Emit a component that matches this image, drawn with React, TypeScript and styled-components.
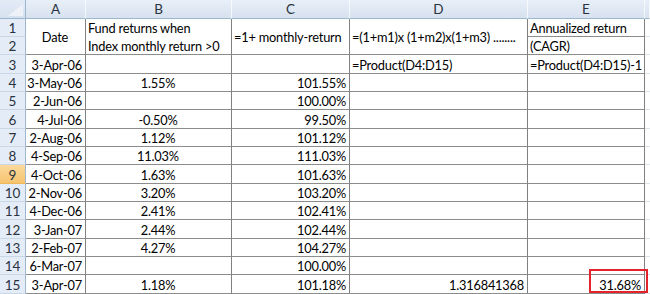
import React from 'react'
import styled, { createGlobalStyle } from 'styled-components'

const GlobalStyle = createGlobalStyle`
    body {
        margin: 0;
        background: #fff;
        font-family: Lato, "Liberation Sans", sans-serif;
    }
`

const Sheet = styled.div`
    position: relative;
    display: grid;
    grid-template-columns: 26px 60px 146px 118px 178px 117px 5px;
    grid-template-rows: 19px repeat(5, 18px 18px 19px);
    width: 650px;
    height: 294px;
    overflow: hidden;
    font-size: 12.8px;
    letter-spacing: -0.2px;
    color: #000;
`

const Corner = styled.div`
    display: flex;
    align-items: flex-end;
    justify-content: flex-end;
    padding: 0 2px 2px 0;
    background: linear-gradient(#e3ebf6, #d6e1ef);
    border-right: 1px solid #9eb6ce;
    border-bottom: 1px solid #9eb6ce;
    box-sizing: border-box;
`

const CornerMark = styled.div`
    width: 0;
    height: 0;
    border-left: 15px solid transparent;
    border-bottom: 12px solid #eef2f8;
`

const ColHead = styled.div`
    display: flex;
    align-items: center;
    justify-content: center;
    background: linear-gradient(#e8eff8, #d7e2ef);
    border-right: 1px solid #f6f9fc;
    border-bottom: 1px solid #9eb6ce;
    box-sizing: border-box;
    color: #2a3340;
    font-size: 13.5px;
    letter-spacing: 0;
`

const RowHead = styled.div<{ $active?: boolean }>`
    display: flex;
    align-items: center;
    justify-content: center;
    background: ${p => (p.$active ? 'linear-gradient(#fbd99c, #f6c46e)' : '#e4ecf7')};
    border-right: 1px solid #9eb6ce;
    border-bottom: 1px solid ${p => (p.$active ? '#f0b85a' : '#c9d6e6')};
    box-sizing: border-box;
    color: #2a3340;
    font-size: 13.5px;
    letter-spacing: 0;
    padding-top: 1px;
`

const Cell = styled.div<{ $align?: 'left' | 'center' | 'right'; $rows?: number }>`
    display: flex;
    align-items: center;
    justify-content: ${p => (p.$align === 'right' ? 'flex-end' : p.$align === 'center' ? 'center' : 'flex-start')};
    grid-row: span ${p => p.$rows || 1};
    padding: 1px 3px 0 2px;
    border-right: 1px solid #808080;
    border-bottom: 1px solid #8c8c8c;
    box-sizing: border-box;
    white-space: nowrap;
    overflow: hidden;
    min-width: 0;
`

const Wrapped = styled(Cell)`
    white-space: normal;
    line-height: 18px;
    align-items: flex-start;
    padding-top: 0;
`

const Filler = styled.div`
    border-bottom: 1px solid #dde3ec;
`

const Highlight = styled.div`
    position: absolute;
    left: 589px;
    top: 269px;
    width: 59px;
    height: 24px;
    border: 2px solid #e3242b;
    box-sizing: border-box;
    pointer-events: none;
`

const rows: [string, string, string][] = [
    ['3-May-06', '1.55%', '101.55%'],
    ['2-Jun-06', '', '100.00%'],
    ['4-Jul-06', '-0.50%', '99.50%'],
    ['2-Aug-06', '1.12%', '101.12%'],
    ['4-Sep-06', '11.03%', '111.03%'],
    ['4-Oct-06', '1.63%', '101.63%'],
    ['2-Nov-06', '3.20%', '103.20%'],
    ['4-Dec-06', '2.41%', '102.41%'],
    ['3-Jan-07', '2.44%', '102.44%'],
    ['2-Feb-07', '4.27%', '104.27%'],
    ['6-Mar-07', '', '100.00%'],
    ['3-Apr-07', '1.18%', '101.18%'],
]

const App = () => {
    const last = rows.length - 1

    return (
        <React.Fragment>
            <GlobalStyle />
            <Sheet>
                <Corner><CornerMark /></Corner>
                {['A', 'B', 'C', 'D', 'E', ''].map((c, i) => <ColHead key={i}>{c}</ColHead>)}

                <RowHead>1</RowHead>
                <Cell $align="center" $rows={2}>Date</Cell>
                <Wrapped $rows={2}>Fund returns when<br />Index monthly return &gt;0</Wrapped>
                <Cell $rows={2}>=1+ monthly-return</Cell>
                <Cell $rows={2}>=(1+m1)x (1+m2)x(1+m3) ........</Cell>
                <Cell>Annualized return</Cell>
                <Filler />

                <RowHead>2</RowHead>
                <Cell>(CAGR)</Cell>
                <Filler />

                <RowHead>3</RowHead>
                <Cell $align="right">3-Apr-06</Cell>
                <Cell />
                <Cell />
                <Cell>=Product(D4:D15)</Cell>
                <Cell>=Product(D4:D15)-1</Cell>
                <Filler />

                {rows.map(([date, ret, factor], i) => (
                    <React.Fragment key={date}>
                        <RowHead $active={i + 4 === 9}>{i + 4}</RowHead>
                        <Cell $align="right">{date}</Cell>
                        <Cell $align="center">{ret}</Cell>
                        <Cell $align="right">{factor}</Cell>
                        <Cell $align="right">{i === last ? '1.316841368' : ''}</Cell>
                        <Cell $align="right">{i === last ? '31.68%' : ''}</Cell>
                        <Filler />
                    </React.Fragment>
                ))}

                <Highlight />
            </Sheet>
        </React.Fragment>
    )
}

export default App
